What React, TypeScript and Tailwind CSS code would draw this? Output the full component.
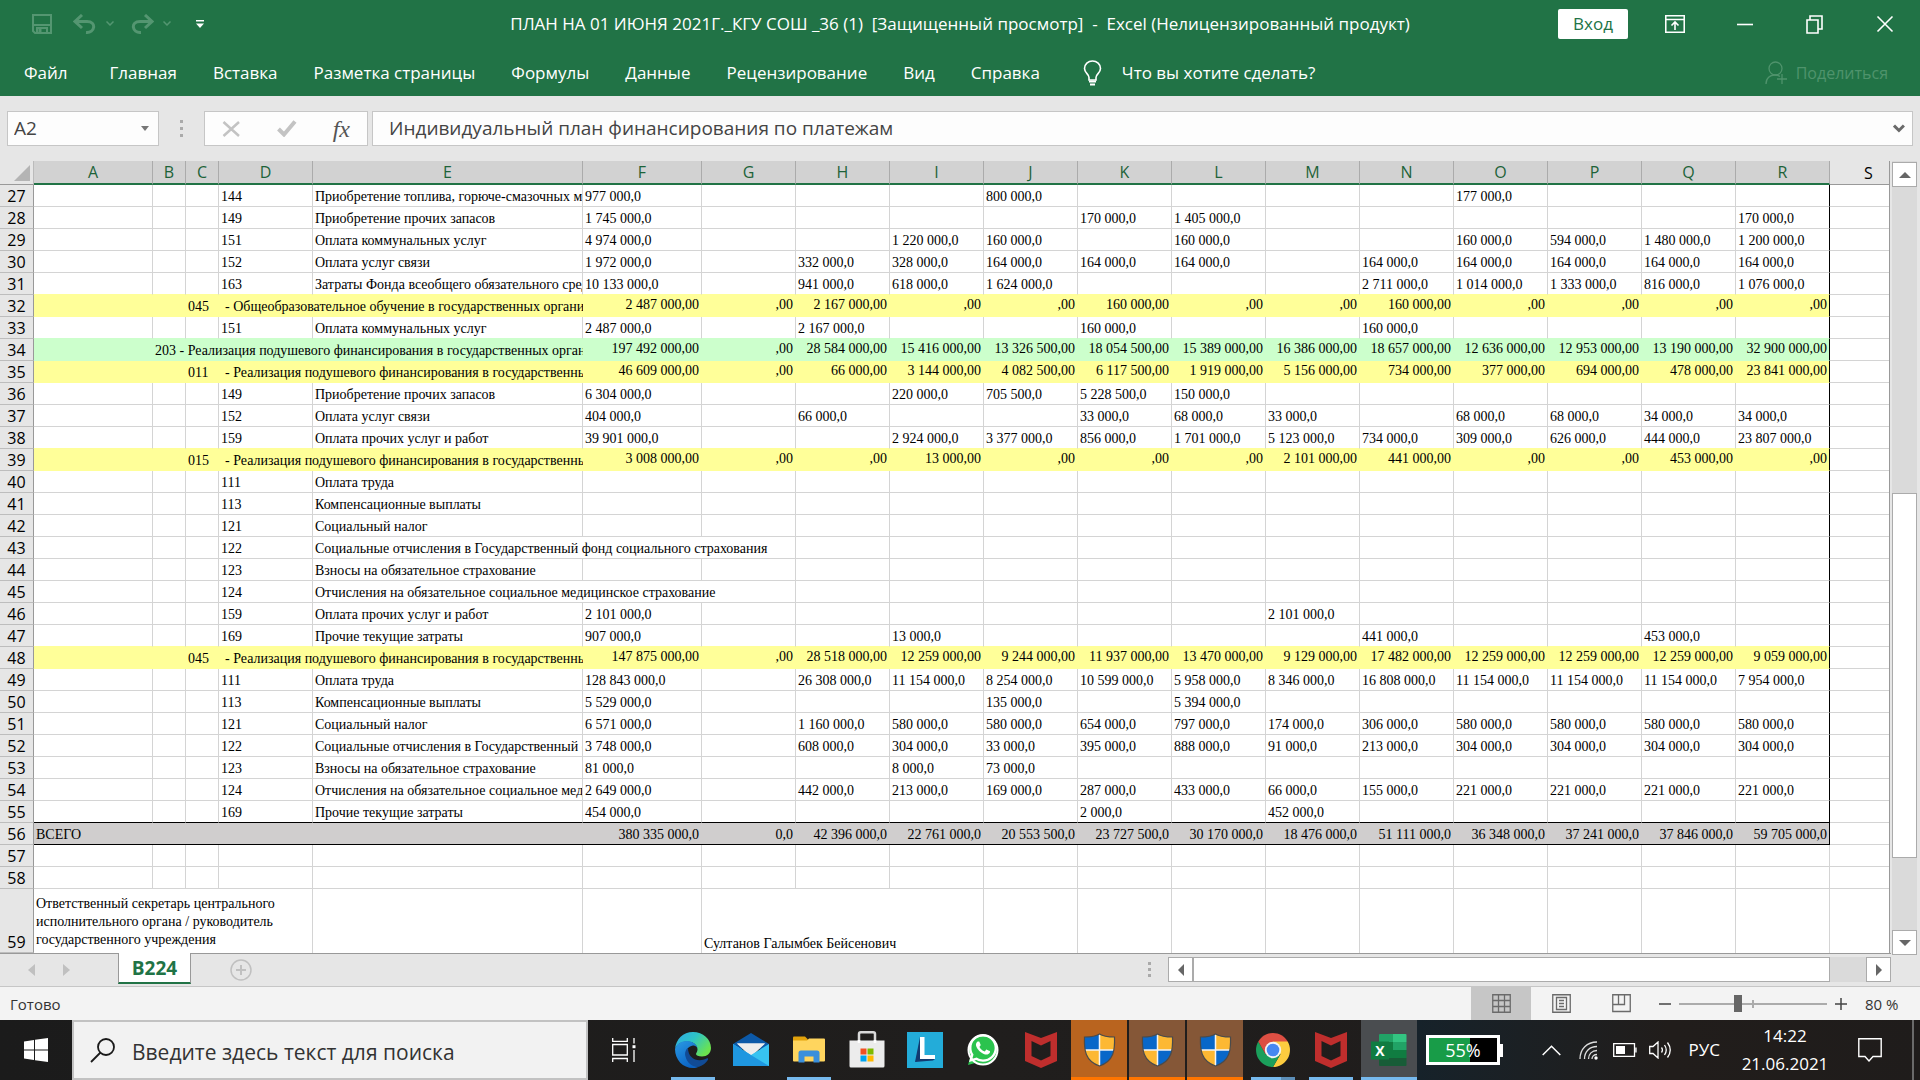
import React from "react";
import { FaWhatsapp } from "react-icons/fa";
import clsx from "clsx";

const COLUMNS = ["A", "B", "C", "D", "E", "F", "G", "H", "I", "J", "K", "L", "M", "N", "O", "P", "Q", "R"];

type Kind = "item" | "yellow" | "green" | "total" | "empty";
type Row = { n: number; kind: Kind; code?: string; label?: string; v: string[]; spill?: number };

const item = (n: number, code: string, label: string, values: string): Row => ({
  n,
  kind: "item",
  code,
  label,
  v: values.split("|"),
});
const fill = (n: number, kind: Kind, code: string, label: string, values: string): Row => ({
  n,
  kind,
  code,
  label,
  v: values.split("|"),
});
const bare = (n: number, code: string, label: string, spill = 0): Row => ({
  n,
  kind: "item",
  code,
  label,
  v: Array(13).fill(""),
  spill,
});

const PER_CAPITA = "- Реализация подушевого финансирования в государственных организациях";

// Values run over columns F to R.
const ROWS: Row[] = [
  item(27, "144", "Приобретение топлива, горюче-смазочных материалов", "977 000,0||||800 000,0|||||177 000,0|||"),
  item(28, "149", "Приобретение прочих запасов", "1 745 000,0|||||170 000,0|1 405 000,0||||||170 000,0"),
  item(29, "151", "Оплата коммунальных услуг", "4 974 000,0|||1 220 000,0|160 000,0||160 000,0|||160 000,0|594 000,0|1 480 000,0|1 200 000,0"),
  item(30, "152", "Оплата услуг связи", "1 972 000,0||332 000,0|328 000,0|164 000,0|164 000,0|164 000,0||164 000,0|164 000,0|164 000,0|164 000,0|164 000,0"),
  item(31, "163", "Затраты Фонда всеобщего обязательного среднего образования", "10 133 000,0||941 000,0|618 000,0|1 624 000,0||||2 711 000,0|1 014 000,0|1 333 000,0|816 000,0|1 076 000,0"),
  fill(32, "yellow", "045", "- Общеобразовательное обучение в государственных организациях", "2 487 000,00|,00|2 167 000,00|,00|,00|160 000,00|,00|,00|160 000,00|,00|,00|,00|,00"),
  item(33, "151", "Оплата коммунальных услуг", "2 487 000,0||2 167 000,0|||160 000,0|||160 000,0||||"),
  fill(34, "green", "", "203 - Реализация подушевого финансирования в государственных организациях", "197 492 000,00|,00|28 584 000,00|15 416 000,00|13 326 500,00|18 054 500,00|15 389 000,00|16 386 000,00|18 657 000,00|12 636 000,00|12 953 000,00|13 190 000,00|32 900 000,00"),
  fill(35, "yellow", "011", PER_CAPITA, "46 609 000,00|,00|66 000,00|3 144 000,00|4 082 500,00|6 117 500,00|1 919 000,00|5 156 000,00|734 000,00|377 000,00|694 000,00|478 000,00|23 841 000,00"),
  item(36, "149", "Приобретение прочих запасов", "6 304 000,0|||220 000,0|705 500,0|5 228 500,0|150 000,0||||||"),
  item(37, "152", "Оплата услуг связи", "404 000,0||66 000,0|||33 000,0|68 000,0|33 000,0||68 000,0|68 000,0|34 000,0|34 000,0"),
  item(38, "159", "Оплата прочих услуг и работ", "39 901 000,0|||2 924 000,0|3 377 000,0|856 000,0|1 701 000,0|5 123 000,0|734 000,0|309 000,0|626 000,0|444 000,0|23 807 000,0"),
  fill(39, "yellow", "015", PER_CAPITA, "3 008 000,00|,00|,00|13 000,00|,00|,00|,00|2 101 000,00|441 000,00|,00|,00|453 000,00|,00"),
  bare(40, "111", "Оплата труда"),
  bare(41, "113", "Компенсационные выплаты"),
  bare(42, "121", "Социальный налог"),
  bare(43, "122", "Социальные отчисления в Государственный фонд социального страхования", 2),
  bare(44, "123", "Взносы на обязательное страхование"),
  bare(45, "124", "Отчисления на обязательное социальное медицинское страхование", 2),
  item(46, "159", "Оплата прочих услуг и работ", "2 101 000,0|||||||2 101 000,0|||||"),
  item(47, "169", "Прочие текущие затраты", "907 000,0|||13 000,0|||||441 000,0|||453 000,0|"),
  fill(48, "yellow", "045", PER_CAPITA, "147 875 000,00|,00|28 518 000,00|12 259 000,00|9 244 000,00|11 937 000,00|13 470 000,00|9 129 000,00|17 482 000,00|12 259 000,00|12 259 000,00|12 259 000,00|9 059 000,00"),
  item(49, "111", "Оплата труда", "128 843 000,0||26 308 000,0|11 154 000,0|8 254 000,0|10 599 000,0|5 958 000,0|8 346 000,0|16 808 000,0|11 154 000,0|11 154 000,0|11 154 000,0|7 954 000,0"),
  item(50, "113", "Компенсационные выплаты", "5 529 000,0||||135 000,0||5 394 000,0||||||"),
  item(51, "121", "Социальный налог", "6 571 000,0||1 160 000,0|580 000,0|580 000,0|654 000,0|797 000,0|174 000,0|306 000,0|580 000,0|580 000,0|580 000,0|580 000,0"),
  item(52, "122", "Социальные отчисления в Государственный фонд социального страхования", "3 748 000,0||608 000,0|304 000,0|33 000,0|395 000,0|888 000,0|91 000,0|213 000,0|304 000,0|304 000,0|304 000,0|304 000,0"),
  item(53, "123", "Взносы на обязательное страхование", "81 000,0|||8 000,0|73 000,0||||||||"),
  item(54, "124", "Отчисления на обязательное социальное медицинское страхование", "2 649 000,0||442 000,0|213 000,0|169 000,0|287 000,0|433 000,0|66 000,0|155 000,0|221 000,0|221 000,0|221 000,0|221 000,0"),
  item(55, "169", "Прочие текущие затраты", "454 000,0|||||2 000,0||452 000,0|||||"),
  fill(56, "total", "", "ВСЕГО", "380 335 000,0|0,0|42 396 000,0|22 761 000,0|20 553 500,0|23 727 500,0|30 170 000,0|18 476 000,0|51 111 000,0|36 348 000,0|37 241 000,0|37 846 000,0|59 705 000,0"),
  { n: 57, kind: "empty", v: Array(13).fill("") },
  { n: 58, kind: "empty", v: Array(13).fill("") },
];

const BG: Record<Kind, string> = {
  item: "",
  empty: "",
  yellow: "bg-[#ffff99]",
  green: "bg-[#ccffcc]",
  total: "bg-[#d0cece]",
};
const LINE: Record<Kind, string> = {
  item: "border-b-[#d4d4d4]",
  empty: "border-b-[#d4d4d4]",
  yellow: "border-b-[#ffff99]",
  green: "border-b-[#ccffcc]",
  total: "border-b-black",
};

function RowHead({ n, tall }: { n: number; tall?: boolean }) {
  return (
    <th
      scope="row"
      className={clsx(
        "border-r border-b border-r-[#999] border-b-[#bdbdbd] bg-[#e6e6e6] p-0 text-center font-['Open_Sans',sans-serif] text-[16px] leading-5 font-normal",
        tall ? "align-bottom" : "align-middle",
      )}
    >
      {n}
    </th>
  );
}

function SheetRow({ row, next }: { row: Row; next?: Row }) {
  const plain = row.kind === "item" || row.kind === "empty";
  // A filled row paints over the grid line above it.
  const line = next && plain && next.kind !== "item" && next.kind !== "empty" ? LINE[next.kind] : LINE[row.kind];
  const frame = clsx("h-[22px] overflow-hidden border-b p-0 whitespace-nowrap", line, BG[row.kind]);
  const grid = plain ? "border-r border-r-[#d4d4d4]" : "";
  const cell = clsx(frame, grid, "px-[2px] pt-[2px]");
  const values = row.v.slice(row.spill ?? 0);
  return (
    <tr>
      <RowHead n={row.n} />
      {plain && (
        <>
          <td className={cell} />
          <td className={cell} />
          <td className={cell} />
          <td className={cell}>{row.code}</td>
          <td className={cell} colSpan={1 + (row.spill ?? 0)}>
            {row.label}
          </td>
        </>
      )}
      {row.kind === "yellow" && (
        <>
          <td className={cell} colSpan={2} />
          <td className={cell}>{row.code}</td>
          <td className={clsx(frame, "pt-[2px] pr-px pl-[6px]")} colSpan={2}>
            {row.label}
          </td>
        </>
      )}
      {row.kind === "green" && (
        <>
          <td className={cell} />
          <td className={cell} colSpan={4}>
            {row.label}
          </td>
        </>
      )}
      {row.kind === "total" && (
        <td className={cell} colSpan={5}>
          {row.label}
        </td>
      )}
      {values.map((v, i) => {
        const last = i === values.length - 1;
        return (
          <td
            key={i}
            className={clsx(
              frame,
              last && row.kind !== "empty" ? "border-r border-r-black" : grid,
              plain && "px-[2px] pt-[2px]",
              !plain && "text-right",
              !plain && (last ? "pr-[2px]" : "pr-[3px]"),
              row.kind === "total" ? "pt-[2px]" : !plain && "pb-px",
            )}
          >
            {v}
          </td>
        );
      })}
      <td className="border-b border-b-[#d4d4d4] p-0" />
    </tr>
  );
}

function Sheet() {
  return (
    <table className="w-full table-fixed border-separate border-spacing-0 border-r border-[#999] bg-white font-['Liberation_Serif','Times_New_Roman',serif] text-[14px] leading-[18px] text-black">
      <colgroup>
        <col className="w-[34px]" />
        <col className="w-[119px]" />
        <col className="w-[33px]" />
        <col className="w-[33px]" />
        <col className="w-[94px]" />
        <col className="w-[270px]" />
        <col className="w-[119px]" />
        {COLUMNS.slice(6).map((c) => (
          <col key={c} className="w-[94px]" />
        ))}
        <col />
      </colgroup>
      <thead className="font-['Open_Sans',sans-serif] text-[16px] leading-5">
        <tr>
          <th className="h-6 border-r border-b border-r-[#bbb] border-b-[#999] bg-[#e6e6e6] p-0 align-bottom">
            <svg className="mb-[3px] ml-[14px]" width="16" height="16" aria-hidden="true">
              <path d="M16 0V16H0Z" fill="#b4b4b4" />
            </svg>
          </th>
          {COLUMNS.map((c) => (
            <th
              key={c}
              scope="col"
              className="h-6 border-r border-b-2 border-r-[#ababab] border-b-[#217346] bg-[#d2d2d2] p-0 text-center font-normal text-[#1d6339]"
            >
              {c}
            </th>
          ))}
          <th scope="col" className="h-6 border-b border-[#999] bg-[#e6e6e6] p-0 pl-[18px] text-center font-normal">
            S
          </th>
        </tr>
      </thead>
      <tbody>
        {ROWS.map((r, i) => (
          <SheetRow key={r.n} row={r} next={ROWS[i + 1]} />
        ))}
        <tr>
          <RowHead n={59} tall />
          <td colSpan={4} className="h-16 border-r border-[#d4d4d4] p-0 px-[2px] pb-1 align-bottom">
            Ответственный секретарь центрального исполнительного органа / руководитель государственного учреждения
          </td>
          <td className="border-r border-[#d4d4d4] p-0" />
          <td className="border-r border-[#d4d4d4] p-0" />
          <td colSpan={3} className="border-r border-[#d4d4d4] p-0 px-[2px] align-bottom whitespace-nowrap">
            Султанов Галымбек Бейсенович
          </td>
          {Array.from({ length: 9 }, (_, i) => (
            <td key={i} className="border-r border-[#d4d4d4] p-0" />
          ))}
          <td className="p-0" />
        </tr>
      </tbody>
    </table>
  );
}

function TitleBar() {
  return (
    <header className="bg-[#217346] text-white">
      <div className="grid h-[47px] grid-cols-[1fr_auto_1fr] items-center text-[17px]">
        <div className="flex items-center pl-8 text-[#549671]">
          <button aria-label="Сохранить">
            <svg width="20" height="20" viewBox="0 0 20 20" fill="none" stroke="currentColor" strokeWidth="2">
              <path d="M1 1H19V19H3L1 17Z M1 11H19" />
              <path d="M5 19V14H15V19" />
              <path d="M8 15V19" strokeWidth="3" />
            </svg>
          </button>
          <button aria-label="Отменить" className="ml-[21px]">
            <svg width="24" height="20" viewBox="0 0 24 20" fill="none" stroke="currentColor" strokeWidth="3">
              <path d="M9 1L2 7.500L9 14 M2 7.500H14C24 7.500 22 19 13 18.500" />
            </svg>
          </button>
          <Chevron className="ml-[9px]" />
          <button aria-label="Вернуть" className="ml-[16px]">
            <svg width="24" height="20" viewBox="0 0 24 20" fill="none" stroke="currentColor" strokeWidth="3">
              <path d="M15 1L22 7.500L15 14 M22 7.500H10C0 7.500 2 19 11 18.500" />
            </svg>
          </button>
          <Chevron className="ml-[9px]" />
          <button aria-label="Настройка панели быстрого доступа" className="ml-[25px] text-white">
            <svg width="8" height="8" viewBox="0 0 8 8" fill="currentColor">
              <path d="M0 0H8V1.500H0Z M0 3.500H8L4 8Z" />
            </svg>
          </button>
        </div>
        <h1 className="whitespace-pre">
          ПЛАН НА 01 ИЮНЯ 2021Г._КГУ СОШ _36 (1)  [Защищенный просмотр]  -  Excel (Нелицензированный продукт)
        </h1>
        <div className="flex items-center justify-end">
          <button className="mr-[12px] h-[30px] rounded-[2px] bg-white px-[15px] text-[#217346]">Вход</button>
          <WinButton label="Параметры отображения ленты">
            <path d="M.75 1.750H19.250V18.250H.75Z M1 5.500H19 M10 16V9 M6.500 11.500L10 8L13.500 11.500" />
          </WinButton>
          <WinButton label="Свернуть">
            <path d="M2 10.500H18" />
          </WinButton>
          <WinButton label="Восстановить">
            <path d="M2 6H13V19H2Z M5 6V2H17V15H13" />
          </WinButton>
          <WinButton label="Закрыть">
            <path d="M2.500 2.500L17.500 17.500M17.500 2.500L2.500 17.500" />
          </WinButton>
        </div>
      </div>
      <nav className="flex h-[49px] items-center pt-[3px] pl-[6px] text-[17px]">
        {["Файл", "Главная", "Вставка", "Разметка страницы", "Формулы", "Данные", "Рецензирование", "Вид", "Справка"].map((t) => (
          <button key={t} className={clsx("px-[18px]", t === "Файл" && "mr-[6px]")}>
            {t}
          </button>
        ))}
        <button className="ml-[25px] flex items-center gap-5">
          <svg width="19" height="26" viewBox="0 0 19 26" fill="none" stroke="currentColor" strokeWidth="1.600">
            <path d="M6 20V17.500C6 14 1.500 13 1.500 8.500A8 7.500 0 0 1 17.500 8.500C17.500 13 13 14 13 17.500V20Z" />
            <path d="M6 21.500H13 M7 24.500H12" strokeWidth="2" />
          </svg>
          Что вы хотите сделать?
        </button>
        <button className="mr-8 ml-auto flex items-center gap-2 text-[16px] text-[#4f936c]" disabled>
          <svg width="23" height="24" viewBox="0 0 23 24" fill="none" stroke="currentColor" strokeWidth="1.300">
            <ellipse cx="10.500" cy="7.500" rx="6.500" ry="6.500" />
            <path d="M1 23C1 17 5 14 10 14C12 14 13.500 14.500 15 15.500 M17 13V23 M12 18H22" />
          </svg>
          Поделиться
        </button>
      </nav>
    </header>
  );
}

function Chevron({ className }: { className: string }) {
  return (
    <svg className={className} width="8" height="5" viewBox="0 0 8 5" fill="none" stroke="currentColor" strokeWidth="1.500" aria-hidden="true">
      <path d="M.5 .5L4 4L7.500 .5" />
    </svg>
  );
}

function WinButton({ label, children }: { label: string; children: React.ReactNode }) {
  return (
    <button aria-label={label} className="flex w-[70px] justify-center">
      <svg width="20" height="20" viewBox="0 0 20 20" fill="none" stroke="currentColor" strokeWidth="1.600">
        {children}
      </svg>
    </button>
  );
}

function FormulaBar() {
  return (
    <div className="flex h-[65px] items-start bg-[#e6e6e6] pt-[15px] pr-[7px] pl-[7px] text-[19px] text-[#444]">
      <div className="flex h-[35px] w-[152px] items-center border border-[#c6c6c6] bg-[#fdfdfd] pr-[9px]">
        <input aria-label="Поле имени" defaultValue="A2" className="w-full min-w-0 bg-transparent pl-[6px] outline-none" />
        <svg width="8" height="5" aria-hidden="true">
          <path d="M0 0H8L4 5Z" fill="#777" />
        </svg>
      </div>
      <div className="flex h-[35px] w-[45px] flex-col items-center justify-center gap-1">
        <i className="size-[3px] bg-[#aaa]" />
        <i className="size-[3px] bg-[#aaa]" />
        <i className="size-[3px] bg-[#aaa]" />
      </div>
      <div className="flex h-[35px] w-[164px] items-center justify-between border border-[#c6c6c6] bg-[#fdfdfd] px-[17px]">
        <button aria-label="Отмена">
          <svg width="19" height="16" viewBox="0 0 19 16" fill="none" stroke="#c3c3c3" strokeWidth="2.500">
            <path d="M1.500 1L17 15M17 1L1.500 15" />
          </svg>
        </button>
        <button aria-label="Ввод">
          <svg width="20" height="17" viewBox="0 0 20 17" fill="none" stroke="#c3c3c3" strokeWidth="4">
            <path d="M1.500 9L7 14.500L18 1.500" />
          </svg>
        </button>
        <button aria-label="Вставить функцию" className="font-['Liberation_Serif',serif] text-[24px] leading-6 text-[#555] italic">
          fx
        </button>
      </div>
      <div className="ml-1 flex h-[35px] flex-1 items-center border border-[#c6c6c6] bg-[#fdfdfd] pr-[7px]">
        <input aria-label="Строка формул" defaultValue="Индивидуальный план финансирования по платежам" className="w-full bg-transparent pl-4 outline-none" />
        <svg width="12" height="9" viewBox="0 0 12 9" fill="none" stroke="#6a6a6a" strokeWidth="3" aria-hidden="true">
          <path d="M1 1.500L6 6.500L11 1.500" />
        </svg>
      </div>
    </div>
  );
}

function ScrollButton({ label, d }: { label: string; d: string }) {
  return (
    <button aria-label={label} className="flex size-[25px] shrink-0 items-center justify-center border border-[#ababab] bg-white">
      <svg width="12" height="12" viewBox="0 0 12 12" fill="#666">
        <path d={d} />
      </svg>
    </button>
  );
}

function VerticalScroll() {
  return (
    <div className="z-10 mr-[3px] -mb-[2px] ml-[2px] flex w-[25px] flex-col bg-[#dadada] pt-px">
      <ScrollButton label="Вверх" d="M0 9H12L6 3Z" />
      <div className="flex-[307]" />
      <div className="flex-[364] border border-[#ababab] bg-white" />
      <div className="flex-[72]" />
      <ScrollButton label="Вниз" d="M0 3H12L6 9Z" />
    </div>
  );
}

function TabBar() {
  return (
    <div className="flex h-[34px] border-b border-[#c6c6c6] bg-[#e6e6e6]">
      <div className="flex h-8 w-[118px] items-center gap-[26px] border-t border-[#999] pl-7 text-[#c0c0c0]">
        <svg width="8" height="12" fill="currentColor" aria-label="Предыдущий лист">
          <path d="M7 0V12L0 6Z" />
        </svg>
        <svg width="8" height="12" fill="currentColor" aria-label="Следующий лист">
          <path d="M1 0V12L8 6Z" />
        </svg>
      </div>
      <button className="h-[31px] w-[73px] border-x border-b-2 border-x-[#999] border-b-[#217346] bg-white text-[19px] leading-7 font-bold text-[#217346]">
        B224
      </button>
      <div className="flex h-8 flex-1 items-center justify-between border-t border-[#999] pr-[17px] pl-[39px]">
        <button aria-label="Новый лист">
          <svg width="22" height="22" viewBox="0 0 22 22" fill="none" stroke="#c0c0c0" strokeWidth="1.500">
            <circle cx="11" cy="11" r="10" />
            <path d="M11 6V16M6 11H16" strokeWidth="2" />
          </svg>
        </button>
        <div className="flex flex-col gap-[3px]">
          <i className="size-[3px] bg-[#aaa]" />
          <i className="size-[3px] bg-[#aaa]" />
          <i className="size-[3px] bg-[#aaa]" />
        </div>
      </div>
      <div className="w-[723px] border-t border-[#999] pt-[3px]">
        <div className="flex bg-[#dadada]">
          <ScrollButton label="Влево" d="M9 0V12L3 6Z" />
          <div className="w-[637px] border border-[#ababab] bg-white" />
          <div className="flex-1" />
          <ScrollButton label="Вправо" d="M3 0V12L9 6Z" />
        </div>
      </div>
      <div className="w-[29px]" />
    </div>
  );
}

function StatusBar() {
  return (
    <footer className="flex h-[33px] items-center bg-[#f3f3f3] text-[15px] text-[#333]">
      <span className="flex-1 pt-px pl-[10px]">Готово</span>
      <ViewButton label="Обычный" active d="M.75 .75H18.250V18.250H.75Z M.75 6.500H18.250 M.75 12.500H18.250 M6.500 .75V18.250 M12.500 .75V18.250" />
      <ViewButton label="Разметка страницы" d="M.75 .75H18.250V18.250H.75Z M4.500 3.500H14.500V15.500H4.500Z M7 6.500H12 M7 9.500H12 M7 12.500H12" />
      <ViewButton label="Страничный режим" d="M.75 .75H18.250V17.500H.75Z M.75 10.500H12.500V.75 M6.500 .75V10.500" />
      <button aria-label="Уменьшить" className="ml-2">
        <svg width="12" height="12" stroke="#444" strokeWidth="1.500">
          <path d="M0 6H12" />
        </svg>
      </button>
      <div className="relative mx-2 flex h-5 w-[148px] items-center">
        <i className="absolute top-[6px] left-[73px] h-2 w-[2px] bg-[#ababab]" />
        <input
          type="range"
          aria-label="Масштаб"
          min={0}
          max={100}
          defaultValue={39}
          className="relative h-[2px] w-full appearance-none bg-[#ababab] [&::-webkit-slider-thumb]:h-[17px] [&::-webkit-slider-thumb]:w-2 [&::-webkit-slider-thumb]:appearance-none [&::-webkit-slider-thumb]:bg-[#666]"
        />
      </div>
      <button aria-label="Увеличить">
        <svg width="12" height="12" stroke="#444" strokeWidth="1.500">
          <path d="M0 6H12M6 0V12" />
        </svg>
      </button>
      <span className="w-[73px] pt-px pl-[18px] whitespace-nowrap">80 %</span>
    </footer>
  );
}

function ViewButton({ label, d, active }: { label: string; d: string; active?: boolean }) {
  return (
    <button aria-label={label} className={clsx("flex h-full w-[60px] items-center justify-center", active && "bg-[#c6c6c6]")}>
      <svg width="19" height="19" viewBox="0 0 19 19" fill="none" stroke="#6a6a6a" strokeWidth="1.300">
        <path d={d} />
      </svg>
    </button>
  );
}

function EdgeLogo() {
  return (
    <svg width="36" height="36" viewBox="0 0 36 36">
      <defs>
        <linearGradient id="eg" x1="0" y1="0" x2="1" y2=".6">
          <stop offset="0" stopColor="#2fa8e8" />
          <stop offset=".5" stopColor="#2ec4c6" />
          <stop offset="1" stopColor="#6be34e" />
        </linearGradient>
        <linearGradient id="eb" x1="0" y1="0" x2=".6" y2="1">
          <stop offset="0" stopColor="#2a9ae3" />
          <stop offset="1" stopColor="#0a62c4" />
        </linearGradient>
      </defs>
      <path d="M0 17C1 7 8 0 18 0C28 0 36 7 36 16C36 21 32 24.500 27 24.500C23.500 24.500 21 23.500 21 22C21 21 22.500 20 22.500 17.500C22.500 13 18 9.500 12 9.500C6 9.500 1.500 12.500 0 17Z" fill="url(#eg)" />
      <path d="M0 17C1.500 12 6 9 12 9C18 9 22.500 13 22.500 17C22.500 15 20 13.500 18 13.500C13 14 10 19 11 24C12.500 30 19 34.500 24 34.800C22 35.700 20 36 18 36C8 36 0 28 0 17Z" fill="url(#eb)" />
      <path d="M13 16C10 18 9.500 22 11 26C13 32 19 35.500 24 34.700C28 33.500 31 31 33 27.700C33.500 26.500 32.500 26 31.500 26.600C23 30.500 13 27 13 16Z" fill="#114b96" />
    </svg>
  );
}

function MailLogo() {
  return (
    <svg width="36" height="34" viewBox="0 0 36 34">
      <path d="M0 11L18 0L36 11V16H0Z" fill="#0c59a8" />
      <path d="M4 10.500H32L18 24Z" fill="#ededed" />
      <path d="M0 11L18 22L36 11V33H0Z" fill="#37c3f1" />
      <path d="M0 11L36 33H0Z" fill="#1f97e0" />
      <path d="M4 10.500H32L18 21.500Z" fill="#ededed" />
    </svg>
  );
}

function FolderLogo() {
  return (
    <svg width="32" height="28" viewBox="0 0 32 28">
      <path d="M0 1.500Q0 .5 1 .5H12L15 3.500V8H0Z" fill="#e2a20b" />
      <path d="M0 4.500H14L16 2.500H31Q32 2.500 32 3.500V24.500Q32 25.500 31 25.500H1Q0 25.500 0 24.500Z" fill="#ffd55e" />
      <path d="M5.500 26.500V17Q5.500 14.500 8 14.500H24Q26.500 14.500 26.500 17V26.500H20.500V20.500H11.500V26.500Z" fill="#3a8fdc" />
    </svg>
  );
}

function StoreLogo() {
  return (
    <svg width="36" height="37" viewBox="0 0 36 37">
      <path d="M10 11V3Q10 1.300 11.700 1.300H24.300Q26 1.300 26 3V11" fill="none" stroke="#d9d9d9" strokeWidth="2.500" />
      <path d="M.5 9.500H35.500V35Q35.500 36.500 34 36.500H2Q.5 36.500 .5 35Z" fill="#ececec" />
      <path d="M10 9V12M26 9V12" stroke="#fff" strokeWidth="2.500" />
      <path d="M11.500 17.500H17.500V23.500H11.500Z" fill="#f25022" />
      <path d="M18.500 17.500H24.500V23.500H18.500Z" fill="#7fba00" />
      <path d="M11.500 24.500H17.500V30.500H11.500Z" fill="#00a4ef" />
      <path d="M18.500 24.500H24.500V30.500H18.500Z" fill="#ffb900" />
    </svg>
  );
}

function LLogo() {
  return (
    <svg width="36" height="36" viewBox="0 0 36 36">
      <path d="M0 0H36V36H0Z" fill="#23acd9" />
      <path d="M13 5L8 30L14 27Z" fill="#123a70" />
      <path d="M8 30L13.500 23L28 27L26 28.500Z" fill="#123a70" />
      <path d="M13 5H17.500V23H28V27H13Z" fill="#fff" />
    </svg>
  );
}

function WhatsAppLogo() {
  return (
    <span className="flex size-[34px] items-center justify-center">
      <svg width="34" height="34" viewBox="0 0 34 34">
        <path d="M2 32L4.300 24A14.500 14.500 0 1 1 10 29.800Z" fill="#2bc34e" />
        <FaWhatsapp x="1" y="-1" size={32} color="#fff" />
        <circle cx="17" cy="17" r="14.500" fill="none" stroke="#fff" strokeWidth="2" />
      </svg>
    </span>
  );
}

function McAfeeLogo() {
  return (
    <svg width="32" height="36" viewBox="0 0 32 36">
      <path d="M0 0L16 6L32 0V29L16 36L0 29ZM6.500 9V24L16 28.500L25.500 24V9L16 13.500Z" fill="#bf2e2d" fillRule="evenodd" />
    </svg>
  );
}

function ShieldLogo() {
  return (
    <svg width="33" height="34" viewBox="0 0 33 34">
      <clipPath id="sh">
        <path d="M16.500 1C12 4 6 4 1.500 4C1 17 2 28 16.500 33C31 28 32 17 31.500 4C27 4 21 4 16.500 1Z" />
      </clipPath>
      <g clipPath="url(#sh)">
        <path d="M0 0H16V17H0Z M17 17H33V34H17Z" fill="#0867c9" />
        <path d="M17 0H33V17H17Z M0 17H16V34H0Z" fill="#fdb833" />
        <path d="M16.500 0V34M0 17H33" stroke="#f4f4f4" strokeWidth="1.500" />
      </g>
      <path d="M16.500 1C12 4 6 4 1.500 4C1 17 2 28 16.500 33C31 28 32 17 31.500 4C27 4 21 4 16.500 1Z" fill="none" stroke="#4b4b4b" strokeWidth="1.200" />
    </svg>
  );
}

function ChromeLogo() {
  return (
    <svg width="34" height="34" viewBox="0 0 34 34">
      <path d="M17 17L2.300 8.500A17 17 0 0 1 31.700 8.500Z" fill="#dd4f43" />
      <path d="M17 8.500H31.700A17 17 0 0 1 17 34L24.400 21.300Z" fill="#fdcc3f" />
      <path d="M9.600 21.300L2.300 8.500A17 17 0 0 0 17 34L24.400 21.300Z" fill="#1b9f5b" />
      <path d="M2.300 8.500L9.600 21.300L17 17V8.500Z" fill="#dd4f43" />
      <circle cx="17" cy="17" r="8.200" fill="#f4f4f4" />
      <circle cx="17" cy="17" r="6.300" fill="#4688f1" />
    </svg>
  );
}

function ExcelLogo() {
  return (
    <svg width="36" height="34" viewBox="0 0 36 34">
      <path d="M8 2Q8 1 9 1H22V9H8Z" fill="#21a366" />
      <path d="M22 1H34.500Q35.500 1 35.500 2V9H22Z" fill="#33c481" />
      <path d="M8 9H22V25H8Z" fill="#107c41" />
      <path d="M22 9H35.500V17H22Z" fill="#21a366" />
      <path d="M22 17H35.500V25H22Z" fill="#107c41" />
      <path d="M8 25H35.500V32Q35.500 33 34.500 33H9Q8 33 8 32Z" fill="#185c37" />
      <path d="M0 8.500H18V26.500H0Z" fill="#107c41" />
      <text x="9" y="22.500" textAnchor="middle" fill="#fff" fontSize="14" fontWeight="700" fontFamily="Open Sans, sans-serif">
        X
      </text>
    </svg>
  );
}

type Bar = "none" | "short" | "full" | "split";
function Tile({ label, bar = "none", bg = "", children }: { label: string; bar?: Bar; bg?: string; children: React.ReactNode }) {
  return (
    <button aria-label={label} className={clsx("flex h-full w-14 flex-col items-center", bg)}>
      <span className="flex flex-1 items-center pt-[2px]">{children}</span>
      <span
        className={clsx(
          "h-[3px]",
          bar === "none" && "w-0",
          bar === "short" && "w-11 bg-[#76b9ed]",
          bar === "split" && "w-11 border-r-[14px] border-[#5d8fb8] bg-[#76b9ed]",
          bar === "full" && (label === "Excel" ? "w-full bg-[#76b9ed]" : "w-full bg-[#ff7500]"),
        )}
      />
    </button>
  );
}

function Taskbar() {
  return (
    <div className="flex h-[60px] items-center bg-linear-to-r from-[#1b1b1b] via-[#201e1d] to-[#1f1c1b] text-white">
      <button aria-label="Пуск" className="flex w-[72px] justify-center">
        <svg width="24" height="24" viewBox="0 0 24 24" fill="#fff">
          <path d="M0 3.500L10 2V11.500H0Z M11 1.800L24 0V11.500H11Z M0 12.500H10V22L0 20.500Z M11 12.500H24V24L11 22.200Z" />
        </svg>
      </button>
      <label className="flex h-full w-[516px] items-center gap-[17px] border-2 border-[#c2c2c2] bg-[#f2f2f2] pl-4">
        <svg width="25" height="25" viewBox="0 0 25 25" fill="none" stroke="#1a1a1a" strokeWidth="1.800">
          <circle cx="16" cy="9" r="8" />
          <path d="M10.500 14.500L1 24" />
        </svg>
        <input aria-label="Поиск" placeholder="Введите здесь текст для поиска" className="flex-1 bg-transparent pt-[5px] text-[21px] outline-none placeholder:text-[#333]" />
      </label>
      <button aria-label="Представление задач" className="mr-[5px] flex w-[72px] justify-center">
        <svg width="24" height="24" viewBox="0 0 24 24" fill="none" stroke="#fff" strokeWidth="1.300">
          <path d="M.7 0V3.300H15.300V0 M.7 6.500H15.300V17H.7Z M.7 24V20.500H15.300V24 M22 0V5.500M22 12V24" />
          <path d="M20.500 7.200H23.500V10.200H20.500Z" fill="#fff" stroke="none" />
        </svg>
      </button>
      <div className="flex h-full gap-[2px]">
        <Tile label="Edge" bar="short"><EdgeLogo /></Tile>
        <Tile label="Почта"><MailLogo /></Tile>
        <Tile label="Проводник" bar="short"><FolderLogo /></Tile>
        <Tile label="Store"><StoreLogo /></Tile>
        <Tile label="L"><LLogo /></Tile>
        <Tile label="WhatsApp"><WhatsAppLogo /></Tile>
        <Tile label="McAfee"><McAfeeLogo /></Tile>
        <Tile label="Защита 1" bar="full" bg="bg-[#b9641f]"><ShieldLogo /></Tile>
        <Tile label="Защита 2" bar="full" bg="bg-[#855737]"><ShieldLogo /></Tile>
        <Tile label="Защита 3" bar="full" bg="bg-[#855737]"><ShieldLogo /></Tile>
        <Tile label="Chrome" bar="split"><ChromeLogo /></Tile>
        <Tile label="McAfee 2" bar="short"><McAfeeLogo /></Tile>
        <Tile label="Excel" bar="full" bg="bg-[#4a4d50]"><ExcelLogo /></Tile>
      </div>
      <div className="flex h-full flex-1 items-center bg-linear-to-r from-[#16222a] via-[#211d1b] to-[#1f1c1b] pl-[9px]">
        <div className="flex items-center">
          <div className="h-[30px] w-[74px] border-3 border-white bg-linear-to-r from-[#189c48] from-60% to-black to-60% text-center text-[18px] leading-6">
            55%
          </div>
          <i className="h-[13px] w-[3px] bg-white" />
        </div>
        <div className="ml-auto flex h-full items-center">
          <svg width="19" height="11" viewBox="0 0 19 11" fill="none" stroke="#fff" strokeWidth="1.500" aria-label="Скрытые значки">
            <path d="M.7 10L9.500 1.200L18.300 10" />
          </svg>
          <svg className="ml-[18px]" width="20" height="19" viewBox="0 0 20 19" fill="none" stroke="#ddd" strokeWidth="1.300" aria-label="Wi-Fi">
            <path d="M1 18C1 8 8 1 18 1 M5.500 18C5.500 10.500 10.500 5.500 18 5.500 M9.500 18C9.500 13 13 9.500 18 9.500 M13 18C13 15.500 15 13.500 18 13.500" />
            <circle cx="17" cy="17" r="1.700" fill="#fff" stroke="none" />
          </svg>
          <svg className="ml-[14px]" width="24" height="14" viewBox="0 0 24 14" fill="none" stroke="#fff" strokeWidth="1.300" aria-label="Батарея">
            <path d="M.7 .7H21.500V13.300H.7Z M23 4.500V9.500" />
            <path d="M3 3H12V11H3Z" fill="#fff" stroke="none" />
          </svg>
          <svg className="ml-3" width="23" height="18" viewBox="0 0 23 18" fill="none" stroke="#fff" strokeWidth="1.300" aria-label="Громкость">
            <path d="M.7 5.500H4L9 1V17L4 12.500H.7Z M12.500 6.500Q14.300 9 12.500 11.500 M15.500 4Q19 9 15.500 14 M18.500 1.500Q24 9 18.500 16.500" />
          </svg>
          <span className="ml-[17px] text-[17px]">РУС</span>
          <span className="w-[130px] text-center text-[17px] leading-7">
            14:22
            <br />
            21.06.2021
          </span>
          <svg className="ml-2" width="24" height="24" viewBox="0 0 24 24" fill="none" stroke="#fff" strokeWidth="1.400" aria-label="Уведомления">
            <path d="M.8 .8H23.200V18.500H15L11 23L7 18.500H.8Z" />
          </svg>
          <i className="ml-[30px] h-full w-[2px] bg-[#6a6a6a]" />
          <i className="w-[6px]" />
        </div>
      </div>
    </div>
  );
}

export default function App() {
  return (
    <div className="flex h-screen flex-col overflow-hidden font-['Open_Sans',sans-serif]">
      <TitleBar />
      <FormulaBar />
      <main className="flex min-h-0 flex-1 bg-[#e6e6e6]">
        <div className="min-w-0 flex-1 overflow-hidden">
          <Sheet />
        </div>
        <VerticalScroll />
      </main>
      <TabBar />
      <StatusBar />
      <Taskbar />
    </div>
  );
}
